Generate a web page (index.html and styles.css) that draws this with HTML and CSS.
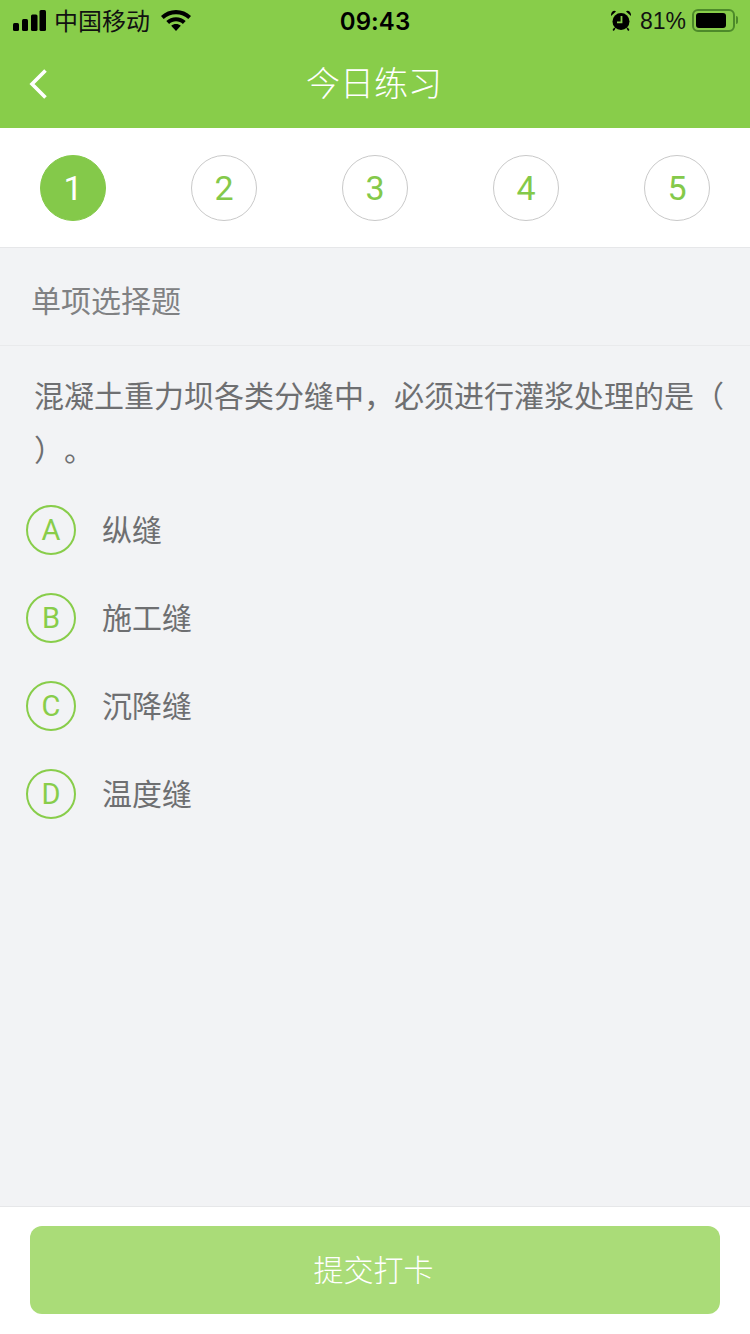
FILE: index.html
```html
<!DOCTYPE html>
<html lang="zh-CN">
<head>
<meta charset="utf-8">
<title>今日练习</title>
<link rel="stylesheet" href="styles.css">
</head>
<body>
<div class="app">
  <header class="header">
    <div class="status">
      <div class="status-left">
        <svg class="signal" width="33" height="21" viewBox="0 0 33 21"><rect x="0" y="13" width="6" height="8" rx="1.500"/><rect x="9" y="9" width="6" height="12" rx="1.500"/><rect x="18" y="4.500" width="6.500" height="16.500" rx="1.500"/><rect x="26.500" y="0" width="6.500" height="21" rx="1.500"/></svg>
        <span class="carrier">中国移动</span>
        <svg class="wifi" width="30" height="21" viewBox="0 0 30 21"><path d="M15 0C9.200 0 4 2.300 0 6l2.700 3C6 6 10.200 4.200 15 4.200S24 6 27.300 9L30 6C26 2.300 20.800 0 15 0z"/><path d="M15 7.200c-3.800 0-7.100 1.400-9.700 3.700l2.800 3c1.900-1.600 4.300-2.600 6.900-2.600s5 1 6.900 2.600l2.800-3C22.100 8.600 18.800 7.200 15 7.200z"/><path d="M15 14c-1.900 0-3.500.6-4.800 1.700L15 21l4.800-5.300C18.500 14.600 16.900 14 15 14z"/></svg>
      </div>
      <div class="time">09:43</div>
      <div class="status-right">
        <svg class="alarm" width="20" height="21" viewBox="0 0 20 21"><circle cx="10" cy="11.500" r="8.500"/><path d="M0 6 5 1.400C2.800 -.4 -.4 2 0 6zM20 6 15 1.400C17.200 -.4 20.400 2 20 6z"/><path d="M3.800 18 2.200 20.500M16.200 18 17.800 20.500" stroke="#000" stroke-width="1.600" fill="none"/><path d="M10.500 6v6.300H6" stroke="#88cd4a" stroke-width="1.800" fill="none"/></svg>
        <span class="pct">81%</span>
        <div class="battery"><div class="battery-fill"></div></div>
        <div class="battery-nub"></div>
      </div>
    </div>
    <nav class="nav">
      <svg class="back" width="20" height="32" viewBox="0 0 20 32"><path d="M17.500 2.500 4 16l13.500 13.500" fill="none" stroke="#fff" stroke-width="3.600"/></svg>
      <h1 class="title">今日练习</h1>
    </nav>
  </header>

  <section class="steps">
    <div class="step step-on">1</div>
    <div class="step">2</div>
    <div class="step">3</div>
    <div class="step">4</div>
    <div class="step">5</div>
  </section>

  <main class="main">
    <div class="type">单项选择题</div>
    <p class="question">混凝土重力坝各类分缝中，必须进行灌浆处理的是（<br>）。</p>
    <ul class="options">
      <li class="option"><span class="badge">A</span><span class="label">纵缝</span></li>
      <li class="option"><span class="badge">B</span><span class="label">施工缝</span></li>
      <li class="option"><span class="badge">C</span><span class="label">沉降缝</span></li>
      <li class="option"><span class="badge">D</span><span class="label">温度缝</span></li>
    </ul>
  </main>

  <footer class="footer">
    <button class="submit" type="button">提交打卡</button>
  </footer>
</div>
</body>
</html>
```
FILE: styles.css
```css
* { box-sizing: border-box; }
html, body { margin: 0; padding: 0; }
body {
  width: 750px;
  height: 1334px;
  overflow: hidden;
  font-family: "Noto Sans CJK SC", "Liberation Sans", sans-serif;
  background: #f2f3f5;
}
.app { display: flex; flex-direction: column; height: 1334px; }

.header { background: #88cd4a; height: 128px; flex: none; }
.status {
  height: 40px;
  display: grid;
  grid-template-columns: 1fr auto 1fr;
  align-items: center;
  padding: 0 12px 0 13px;
  color: #000;
}
.status-left, .status-right { display: flex; align-items: center; }
.status-right { justify-content: flex-end; }
.signal { margin-right: 9px; }
.carrier { font-size: 24px; line-height: 38px; color: #111; margin-left: -1px; }
.wifi { margin-left: 11px; }
.time {
  font-family: "Inter", "Liberation Sans", sans-serif;
  font-size: 24px;
  font-weight: 600;
  letter-spacing: 0.1px;
  padding: 2px 1px 0 0;
}
.alarm { margin-right: 9px; }
.pct { font-family: "Liberation Sans", sans-serif; font-size: 23px; margin: 2px 6px 0 0; color: #111; }
.battery {
  width: 43px;
  height: 23px;
  border: 2px solid #4d8a2a;
  border-radius: 6px;
  padding: 2px;
}
.battery-fill { width: 30px; height: 15px; background: #000; border-radius: 3px; }
.battery-nub { width: 2px; height: 8px; background: #4d8a2a; border-radius: 0 2px 2px 0; margin-left: 1px; }

.nav {
  height: 88px;
  display: flex;
  align-items: center;
  justify-content: center;
  position: relative;
}
.back { position: absolute; left: 28px; top: 28px; }
.title {
  margin: 0 2px 4px 0;
  font-size: 34px;
  font-weight: 300;
  color: #fff;
  line-height: 44px;
}

.steps {
  height: 120px;
  flex: none;
  background: #fff;
  border-bottom: 1px solid #e6e7e9;
  padding: 27px 40px 0;
  display: flex;
  justify-content: space-between;
  align-items: flex-start;
}
.step {
  width: 66px;
  height: 66px;
  border-radius: 50%;
  border: 1px solid #c9c9c9;
  display: flex;
  align-items: center;
  justify-content: center;
  font-family: Roboto, "Liberation Sans", sans-serif;
  font-size: 34px;
  font-weight: 400;
  color: #84c94a;
}
.step-on { background: #84c94a; border-color: #84c94a; color: #fff; }

.main { flex: 1; min-height: 0; }
.type {
  height: 98px;
  padding: 4px 0 0 31px;
  display: flex;
  align-items: center;
  font-size: 30px;
  font-weight: 400;
  color: #808183;
  border-bottom: 1px solid #e9eaec;
}
.question {
  margin: 0;
  padding: 21px 0 0 34px;
  font-size: 30px;
  font-weight: 400;
  line-height: 54px;
  color: #6e6f71;
  white-space: nowrap;
  text-spacing-trim: space-all;
  font-feature-settings: "chws" 0, "halt" 0, "palt" 0;
}
.options { list-style: none; margin: 0; padding: 30px 0 0 26px; }
.option { display: flex; align-items: center; height: 50px; margin-bottom: 38px; }
.badge {
  width: 50px;
  height: 50px;
  flex: none;
  border: 2px solid #88cd4a;
  border-radius: 50%;
  display: flex;
  align-items: center;
  justify-content: center;
  font-family: Roboto, "Liberation Sans", sans-serif;
  font-size: 29px;
  font-weight: 400;
  color: #88cd4a;
}
.label {
  margin-left: 26px;
  font-size: 30px;
  font-weight: 400;
  color: #6e6f71;
  margin-top: -4px;
}

.footer {
  height: 128px;
  flex: none;
  background: #fff;
  border-top: 1px solid #e6e7e9;
  padding: 19px 30px 0;
}
.submit {
  display: block;
  width: 690px;
  height: 88px;
  border: 0;
  border-radius: 12px;
  background: #aadc78;
  color: #fff;
  font-family: inherit;
  font-size: 30px;
  font-weight: 300;
  padding: 0 3px 4px 0;
}
```
